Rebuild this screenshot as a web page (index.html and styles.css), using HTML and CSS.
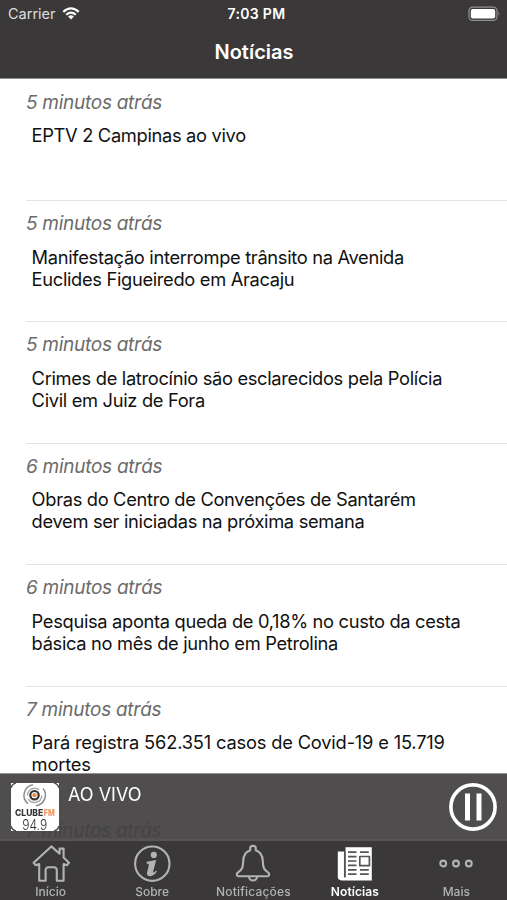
FILE: index.html
```
<!DOCTYPE html>
<html lang="pt-BR">
    <head>
        <meta charset="UTF-8">
        <title>Notícias</title>
        <link rel="stylesheet" href="styles.css">
    </head>
    <body>
        <div class="header">
            <div class="status">
                <div class="carrier">
                    <span>Carrier</span>
                    <svg class="wifi" width="18" height="13" viewBox="0 0 18 13">
                        <path d="M1.3 4.9Q9-2 16.7 4.9M4.2 7.8Q9 3.5 13.8 7.8" fill="none" stroke="#fff" stroke-width="2.2"/>
                        <path d="M6.1 9.4Q9 7.2 11.9 9.4L9 12.4z" fill="#fff"/>
                    </svg>
                </div>
                <div class="clock">7:03 PM</div>
                <div class="power">
                    <svg width="33" height="16" viewBox="0 0 33 16">
                        <rect x="1" y="1.2" width="28" height="13.2" rx="3.6" fill="none" stroke="#918f90" stroke-width="1.2"/>
                        <rect x="2.8" y="3" width="24.4" height="9.6" rx="2" fill="#fff"/>
                        <path d="M30.5 5.5q1.7 2.3 0 4.6z" fill="#918f90"/>
                    </svg>
                </div>
            </div>
            <h1>Notícias</h1>
        </div>

        <ul class="news">
            <li><em>5 minutos atrás</em><p>EPTV 2 Campinas ao vivo</p></li>
            <li><em>5 minutos atrás</em><p>Manifestação interrompe trânsito na Avenida<br>Euclides Figueiredo em Aracaju</p></li>
            <li><em>5 minutos atrás</em><p>Crimes de latrocínio são esclarecidos pela Polícia<br>Civil em Juiz de Fora</p></li>
            <li><em>6 minutos atrás</em><p>Obras do Centro de Convenções de Santarém<br>devem ser iniciadas na próxima semana</p></li>
            <li><em>6 minutos atrás</em><p>Pesquisa aponta queda de 0,18% no custo da cesta<br>básica no mês de junho em Petrolina</p></li>
            <li><em>7 minutos atrás</em><p class="figures">Pará registra 562.351 casos de Covid-19 e 15.719<br>mortes</p></li>
            <li><em>7 minutos atrás</em></li>
        </ul>

        <div class="dock">
            <div class="player">
                <svg class="cover" width="48" height="48" viewBox="0 0 48 48">
                    <rect width="48" height="48" fill="#fff"/>
                    <path d="M0 5Q1 1 5 0M43 0Q47 1 48 5M0 43Q1 47 5 48M43 48Q47 47 48 43" fill="none" stroke="#555" stroke-width="1.5"/>
                    <g fill="none" stroke-width="1.5">
                        <path d="M22 1.8A10.7 10.7 0 0 0 17 20.7M25 22.7A10.7 10.7 0 0 0 32 5.4" stroke="#8b8b8b"/>
                        <path d="M28 6.8A7.3 7.3 0 0 0 16.4 12.5M17.2 15.8A7.3 7.3 0 0 0 30.8 12.5" stroke="#aaa"/>
                        <circle cx="23.5" cy="12.2" r="4.2" stroke="#333" stroke-width="2.2"/>
                    </g>
                    <circle cx="23.5" cy="12.2" r="2.1" fill="#f18a3c"/>
                    <text class="club" x="4" y="33.4" textLength="28.2" lengthAdjust="spacingAndGlyphs">CLUBE</text>
                    <text class="club fm" x="32.8" y="33.4" textLength="11" lengthAdjust="spacingAndGlyphs">FM</text>
                    <text class="freq" x="11.2" y="46.6" textLength="25" lengthAdjust="spacingAndGlyphs">94.9</text>
                </svg>
                <div class="live">AO VIVO</div>
                <svg class="pause" width="48" height="48" viewBox="0 0 48 48">
                    <circle cx="24" cy="24" r="22.1" fill="none" stroke="#fff" stroke-width="3.6"/>
                    <path d="M16 10.5h5v27h-5zM27.5 10.5h5v27h-5z" fill="#fff"/>
                </svg>
            </div>

            <div class="tabs">
                <div class="tab">
                    <svg width="40" height="40" viewBox="0 0 40 40">
                        <path d="M20.3 2.4L2.6 18.8L4.8 21.3L8.2 20V36.8H14.6V26Q14.8 23.4 17.5 23.2H23Q25.6 23.4 25.8 26V36.8H32.6V20L35.8 21.3L38 18.8L32.6 13.6V4.6H28.6V9.8Z"/>
                    </svg>
                    <span>Início</span>
                </div>
                <div class="tab">
                    <svg width="40" height="40" viewBox="0 0 40 40">
                        <circle cx="20.3" cy="19.7" r="17.2"/>
                        <circle class="solid" cx="21.8" cy="10.9" r="3.1"/>
                        <path class="solid" d="M14.6 17.8L24.2 16L21.2 27.6Q20.9 29 21.8 28.6Q22.8 28 23.8 26.8L25 27.6Q21.4 32.5 17.6 32.2Q14.2 31.8 15.1 28.2L16.9 21Q17.2 19.4 14.6 19.4Z"/>
                    </svg>
                    <span>Sobre</span>
                </div>
                <div class="tab wide">
                    <svg width="40" height="40" viewBox="0 0 40 40">
                        <path d="M17.6 6.2C11.8 7.6 10.4 12 10.2 17C10 24 8.9 25.8 5.3 28.1Q3.3 29.4 4 31.4Q4.4 32.3 6 32.3H34Q35.6 32.3 36 31.4Q36.7 29.4 34.7 28.1C31.1 25.8 30 24 29.8 17C29.6 12 28.2 7.6 22.4 6.2"/>
                        <path d="M17.2 6.7V4.4A2.8 2.6 0 0 1 22.8 4.4V6.7M16 32.8A4 3.7 0 0 0 24 32.8"/>
                    </svg>
                    <span>Notificações</span>
                </div>
                <div class="tab active">
                    <svg width="40" height="40" viewBox="0 0 40 40">
                        <path class="page" d="M10.5 3.2H36.8V36.4H7.4Q2.8 36.4 2.8 33V7.6H9V33.2H10.5Z"/>
                        <g class="ink">
                            <path d="M9.8 7V33.2M13 8.2H21.5M25 8.2H33.8M13 12.6H21.5M13 17H21.5M13 21.4H21.5M13 25.8H21.5M25 25.8H33.8M13 30.2H21.5M25 30.2H33.8"/>
                            <rect x="24.8" y="12.5" width="9.6" height="9.2"/>
                        </g>
                    </svg>
                    <span>Notícias</span>
                </div>
                <div class="tab">
                    <svg width="40" height="40" viewBox="0 0 40 40">
                        <circle cx="7.2" cy="19.5" r="2.9"/>
                        <circle cx="20" cy="19.5" r="2.9"/>
                        <circle cx="32.8" cy="19.5" r="2.9"/>
                    </svg>
                    <span>Mais</span>
                </div>
            </div>
        </div>
    </body>
</html>
```
FILE: styles.css
```
*{
    box-sizing:border-box;
}
html, body{
    height:900px;
    overflow:hidden;
}
body{
    margin:0;
    background:#fff;
    font-family:Inter, "Liberation Sans", sans-serif;
}
.header{
    height:79px;
    background:#3a3838;
    border-bottom:1px solid #8c8b8b;
    color:#fff;
}
.status{
    display:grid;
    grid-template-columns:1fr auto 1fr;
    align-items:center;
    height:27px;
    padding:0 6px 0 8px;
    font-size:14px;
}
.carrier{
    display:flex;
    align-items:center;
    gap:6px;
    color:#dededf;
    font-size:14.5px;
}
.clock{
    padding-left:4px;
    font-weight:600;
    letter-spacing:.3px;
}
.power{
    display:flex;
    justify-content:flex-end;
}
h1{
    margin:0;
    padding-left:1px;
    font-size:20px;
    line-height:50px;
    font-weight:600;
    text-align:center;
}
.news{
    list-style:none;
    margin:0;
    padding:.6px 0 0 26px;
}
.news li{
    height:121.4px;
    padding-top:12px;
    border-bottom:1px solid #e3e3e4;
}
.news em{
    display:block;
    color:#6b6b6b;
    font-size:19px;
    line-height:22px;
    letter-spacing:-.27px;
}
.news p{
    margin:10.6px 0 0 5.6px;
    color:#111;
    font-size:18.3px;
    line-height:22px;
    letter-spacing:-.32px;
    white-space:nowrap;
}
.news .figures{
    letter-spacing:-.18px;
}
/* player and tab bar stay over the list */
.dock{
    position:fixed;
    left:0;
    right:0;
    bottom:0;
}
.player{
    display:flex;
    height:66px;
    padding:9px 10px 0 11px;
    border-top:1px solid #969596;
    background:rgba(66,64,65,.93);
    background-clip:padding-box;
}
.live{
    flex:1;
    padding-left:9px;
    color:#fff;
    font-size:18px;
    line-height:23px;
}
.club{
    font-size:9px;
    font-weight:800;
    fill:#333;
}
.fm{
    fill:#f4945a;
}
.freq{
    font-size:14px;
    font-weight:300;
    fill:#333;
}
.tabs{
    display:grid;
    grid-template-columns:repeat(5, 1fr);
    height:61px;
    border-top:2px solid #565455;
    background:#3a3838;
}
.tab{
    display:flex;
    flex-direction:column;
    align-items:center;
    padding-top:3px;
    color:#b4b3b3;
    font-size:12px;
    line-height:15px;
    font-weight:500;
}
.tab svg{
    fill:none;
    stroke:#b4b3b3;
    stroke-width:2.1;
    stroke-linejoin:round;
}
.tab .solid{
    fill:#b4b3b3;
    stroke:none;
}
.tab.wide{
    letter-spacing:.2px;
}
.tab.active{
    color:#fff;
    font-weight:600;
    letter-spacing:.1px;
}
.tab .page{
    fill:#fff;
    stroke:none;
}
.tab .ink{
    stroke:#555;
    stroke-width:1.7;
}
```
